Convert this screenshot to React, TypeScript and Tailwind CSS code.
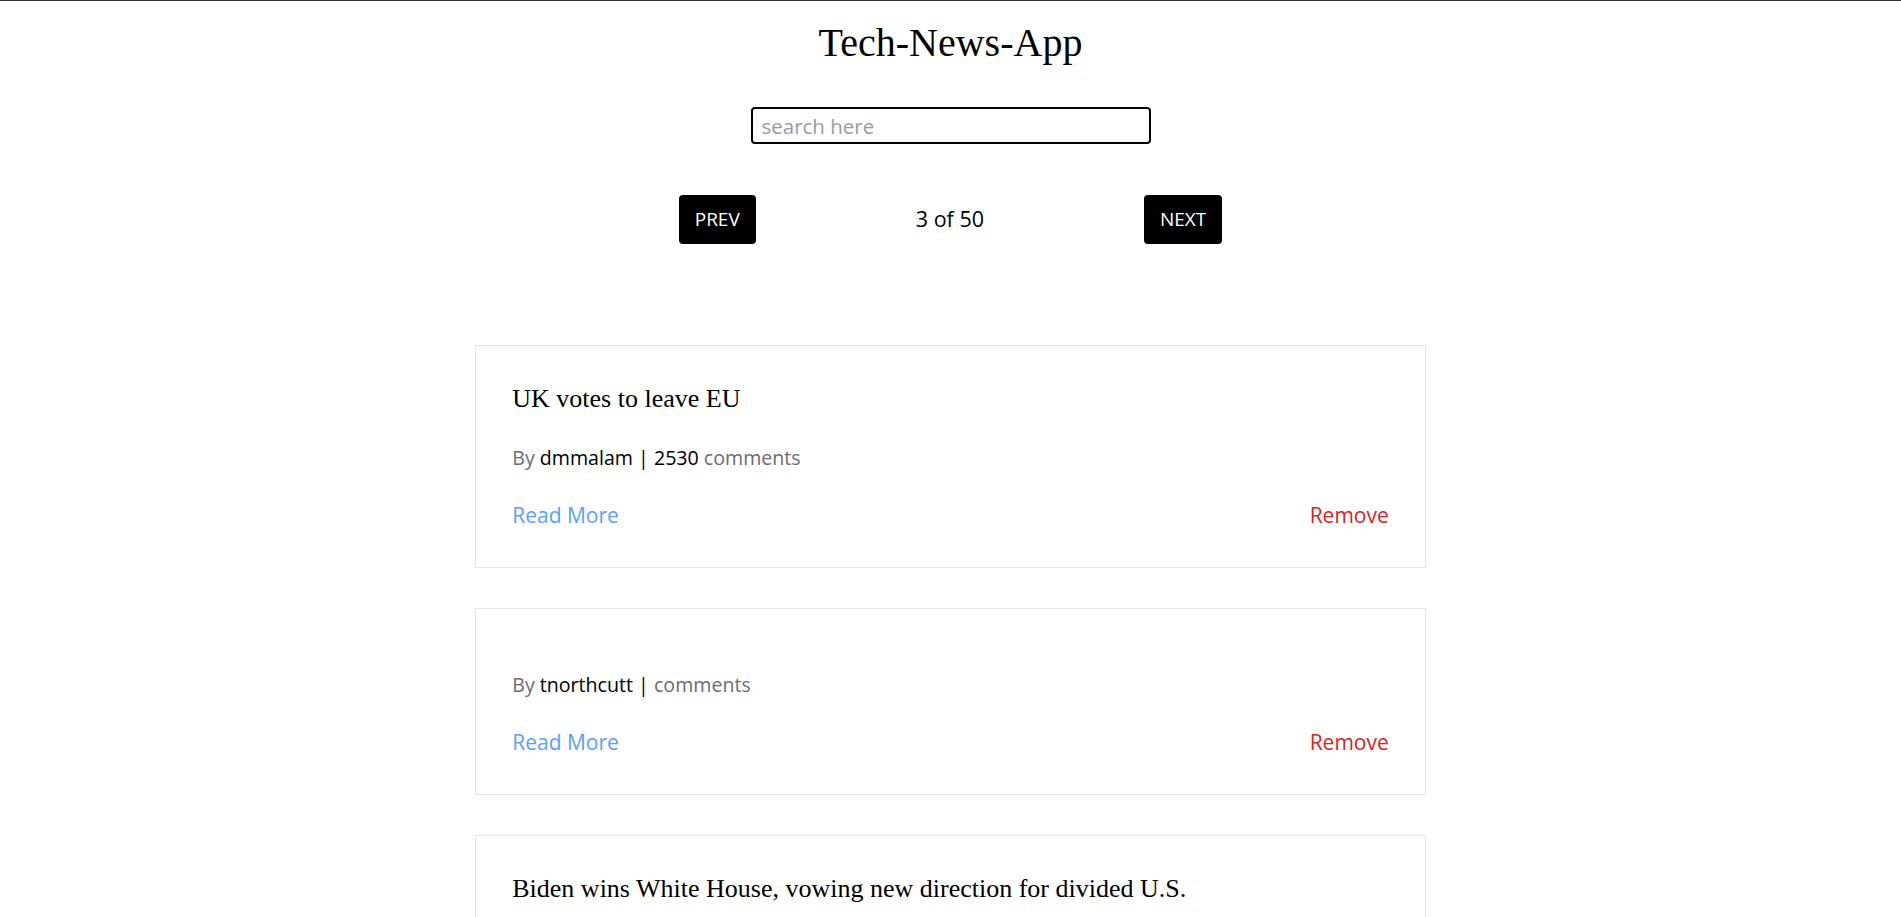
import React, {useState} from 'react';

const stories = [
    {id: 1, title: 'UK votes to leave EU', author: 'dmmalam', comments: 2530},
    {id: 2, title: '', author: 'tnorthcutt', comments: null},
    {id: 3, title: 'Biden wins White House, vowing new direction for divided U.S.', author: 'throwaway888', comments: 2432},
    {id: 4, title: 'Trump Wins', author: 'hkmurakami', comments: 2208},
    {id: 5, title: 'Steve Jobs has passed away.', author: 'patricktomas', comments: 1091},
];

const sans = "font-['Open_Sans','Noto_Sans',sans-serif]";
const serif = "font-['Liberation_Serif','Times_New_Roman',serif]";

const App = () => {
    const [query, setQuery] = useState('');
    const [page] = useState(3);
    const [hits, setHits] = useState(stories);

    const handleRemove = (id: number) => {
        setHits(hits.filter((item) => item.id !== id));
    };

    return (
        <div className={`min-h-screen bg-white border-t border-[#333] pt-[18px] pb-10 ${sans}`}>
            <h1 className={`text-center text-[40px] leading-[47px] text-black ${serif}`}>
                Tech-News-App
            </h1>

            {/* Search */}
            <div className="flex justify-center mt-[41px]">
                <input
                    type="text"
                    value={query}
                    onChange={(e) => setQuery(e.target.value)}
                    placeholder="search here"
                    className="w-[400px] h-[37px] border-2 border-black rounded-[4px] pl-[9px] pr-2 text-[20.5px] text-black outline-0 placeholder:text-[#9a9aa6]"
                />
            </div>

            {/* Pagination */}
            <div className="flex justify-center items-center gap-[160px] mt-[51px]">
                <button className="h-[49px] px-[16px] bg-black text-white rounded-[4px] text-[19px] uppercase">
                    Prev
                </button>
                <p className="text-[21.5px] text-black">{page} of 50</p>
                <button className="h-[49px] px-[16px] bg-black text-white rounded-[4px] text-[19px] uppercase">
                    Next
                </button>
            </div>

            {/* Stories */}
            <div className="mt-[101px] flex flex-col gap-[40px] items-center">
                {hits.map((item) => (
                    <div key={item.id} className="w-1/2 border border-[#e6e6e6] px-[36px] pt-[35px] pb-[38px]">
                        {item.title && (
                            <h2 className={`text-[26px] leading-[36px] text-black ${serif}`}>{item.title}</h2>
                        )}
                        <p className="mt-[27px] text-[19.6px] leading-[28px] text-[#6b6b75]">
                            By <span className="text-black">{item.author} | {item.comments}</span> comments
                        </p>
                        <div className="mt-[29px] flex justify-between text-[21px] leading-[28px]">
                            <a href="#" className="text-[#5aa0ff]">Read More</a>
                            <a href="#" className="text-[#e0201f]" onClick={(e) => {
                                e.preventDefault();
                                handleRemove(item.id);
                            }}>Remove</a>
                        </div>
                    </div>
                ))}
            </div>
        </div>
    );
};

export default App;
